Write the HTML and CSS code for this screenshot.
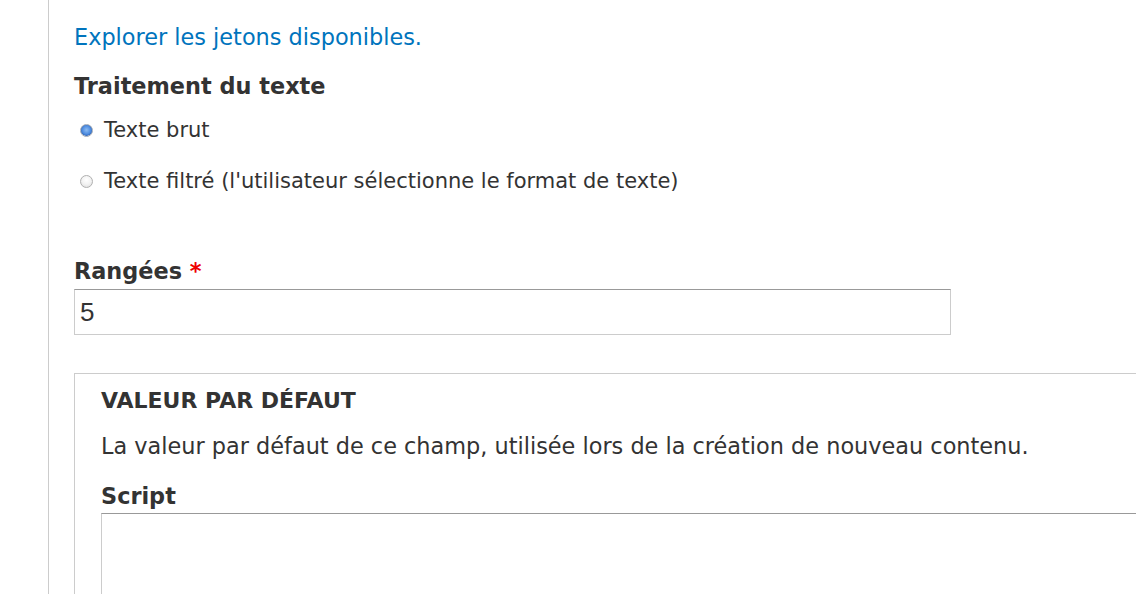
FILE: index.html
```html
<!DOCTYPE html>
<html lang="fr">
<head>
<meta charset="utf-8">
<link rel="stylesheet" href="styles.css">
</head>
<body>
<div class="page">
  <div class="content">
    <p class="tokens"><a href="#">Explorer les jetons disponibles.</a></p>
    <div class="group-label">Traitement du texte</div>
    <div class="radios">
      <label class="radio"><input type="radio" name="tp" checked><span>Texte brut</span></label>
      <label class="radio second"><input type="radio" name="tp"><span>Texte filtré (l'utilisateur sélectionne le format de texte)</span></label>
    </div>
    <label class="field-label rows-label" for="rows">Rangées <span class="req">*</span></label>
    <input class="text-input" id="rows" type="text" value="5">
    <div class="fieldset">
      <div class="legend">VALEUR PAR DÉFAUT</div>
      <div class="desc">La valeur par défaut de ce champ, utilisée lors de la création de nouveau contenu.</div>
      <label class="field-label script-label" for="script">Script</label>
      <textarea class="textarea" id="script"></textarea>
    </div>
  </div>
</div>
</body>
</html>
```

FILE: styles.css
```css
html, body {
  margin: 0;
  padding: 0;
  background: #fff;
  overflow: hidden;
}
body {
  font-family: "DejaVu Sans", sans-serif;
  font-size: 22.4px;
  line-height: 30px;
  color: #333;
  height: 594px;
}
.page {
  margin-left: 48px;
  border-left: 1px solid #cccccc;
  height: 594px;
}
.content {
  padding: 22px 0 0 25px;
}
.tokens {
  margin: 0;
}
.tokens a {
  color: #0074bd;
  text-decoration: none;
}
.group-label {
  font-weight: bold;
  margin-top: 19px;
}
.radios {
  margin-top: 14px;
}
.radio {
  display: flex;
  align-items: center;
  height: 30px;
  font-size: 21px;
}
.radio.second {
  margin-top: 21px;
}
.radio input {
  appearance: none;
  -webkit-appearance: none;
  width: 13px;
  height: 13px;
  margin: 0 11px 0 6px;
  border-radius: 50%;
  border: 1px solid #b0b0b0;
  background: radial-gradient(circle at 50% 35%, #ffffff 0%, #f2f2f2 50%, #dadada 100%);
  box-sizing: border-box;
  flex: none;
}
.radio input:checked {
  border-color: #a0a8b4;
  background:
    radial-gradient(circle at 50% 45%, #8dbcf2 0%, #4f8de0 50%, #3b72c4 68%, #c8d4e4 74%, transparent 78%),
    radial-gradient(circle at 50% 35%, #ffffff 0%, #eeeeee 60%, #d5d5d5 100%);
}
.field-label {
  display: block;
  font-weight: bold;
}
.rows-label {
  margin-top: 60px;
}
.req {
  color: #e00;
}
.text-input {
  display: block;
  box-sizing: border-box;
  width: 877px;
  height: 46px;
  margin-top: 3px;
  padding: 0 5px;
  border: 1px solid #cccccc;
  border-top-color: #999999;
  font-family: "Liberation Sans", Arial, sans-serif;
  font-size: 26px;
  color: #333;
  outline: none;
  background: #fff;
}
.fieldset {
  margin-top: 38px;
  border: 1px solid #cccccc;
  border-right: none;
  padding: 12px 0 0 26px;
  height: 300px;
}
.legend {
  font-weight: bold;
  text-transform: uppercase;
  font-size: 22px;
}
.desc {
  margin-top: 15px;
}
.script-label {
  margin-top: 20px;
}
.textarea {
  display: block;
  box-sizing: border-box;
  width: 1100px;
  height: 150px;
  margin-top: 2px;
  border: 1px solid #cccccc;
  border-top-color: #999999;
  resize: none;
  outline: none;
}
```
